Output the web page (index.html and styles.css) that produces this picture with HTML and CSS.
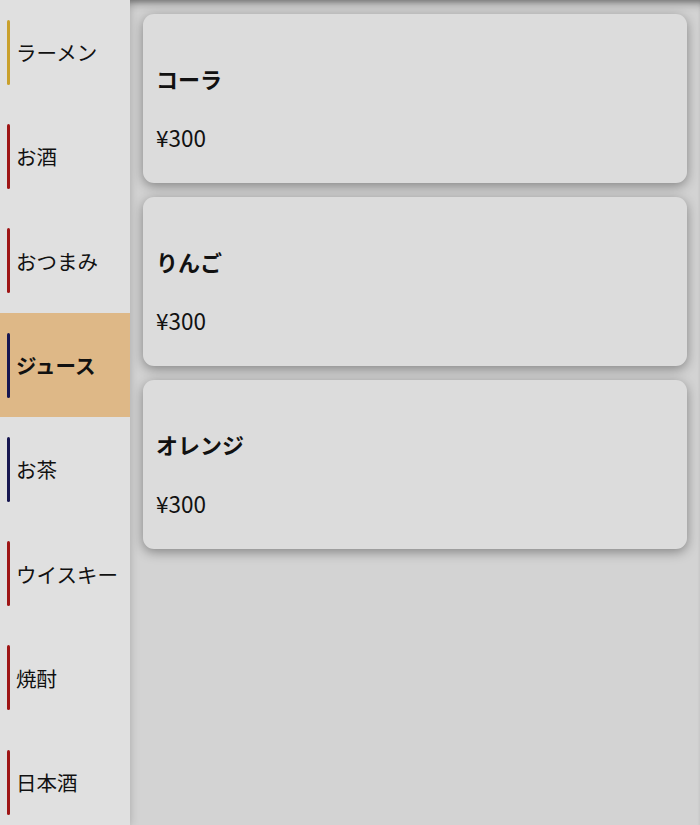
FILE: index.html
```html
<!DOCTYPE html>
<html lang="ja">
<head>
    <meta charset="UTF-8">
    <meta name="viewport" content="width=device-width, initial-scale=1.0">
    <title>メニュー</title>
    <link rel="stylesheet" href="styles.css">
</head>
<body>
    <div class="app">
        <nav class="sidebar">
            <div class="cat gold"><span class="bar"></span>ラーメン</div>
            <div class="cat red"><span class="bar"></span>お酒</div>
            <div class="cat red"><span class="bar"></span>おつまみ</div>
            <div class="cat navy active"><span class="bar"></span>ジュース</div>
            <div class="cat navy"><span class="bar"></span>お茶</div>
            <div class="cat red"><span class="bar"></span>ウイスキー</div>
            <div class="cat red"><span class="bar"></span>焼酎</div>
            <div class="cat red"><span class="bar"></span>日本酒</div>
        </nav>
        <main class="items">
            <div class="card">
                <h3>コーラ</h3>
                <p class="price">¥300</p>
            </div>
            <div class="card">
                <h3>りんご</h3>
                <p class="price">¥300</p>
            </div>
            <div class="card">
                <h3>オレンジ</h3>
                <p class="price">¥300</p>
            </div>
        </main>
    </div>
</body>
</html>
```

FILE: styles.css
```css
body {
    margin: 0;
    font-family: "Noto Sans CJK JP", "Noto Sans", sans-serif;
    color: #111;
    background-color: #d3d3d3;
}
.app {
    display: flex;
    height: 825px;
    overflow: hidden;
    box-shadow: inset 0 4px 4px -2px rgba(0,0,0,0.2);
}
.sidebar {
    width: 130px;
    flex-shrink: 0;
    background: #e0e0e0;
    box-shadow: 2px 0 8px rgba(0,0,0,0.12);
    position: relative;
    z-index: 1;
}
.cat {
    display: flex;
    align-items: center;
    gap: 6px;
    height: 104.3px;
    padding-left: 7px;
    font-size: 20.5px;
    box-sizing: border-box;
}
.cat .bar {
    width: 3px;
    height: 65px;
    border-radius: 2px;
    flex-shrink: 0;
}
.gold .bar { background: #c9a02c; }
.red .bar { background: #9e1515; }
.navy .bar { background: #161650; }
.cat.active {
    background: #deb887;
    font-weight: bold;
}
.items {
    flex: 1;
    padding: 14px 13px 0 13px;
    display: flex;
    flex-direction: column;
    gap: 14px;
    box-shadow: inset 0 10px 8px -6px rgba(0,0,0,0.3);
}
.card {
    background: #dcdcdc;
    border-radius: 11px;
    height: 169px;
    box-sizing: border-box;
    padding: 48px 13px 0 13px;
    box-shadow: 0 3px 12px rgba(0,0,0,0.38);
}
.card h3 {
    margin: 0;
    font-size: 22px;
    line-height: 32px;
}
.card .price {
    margin: 27px 0 0;
    font-size: 22.5px;
    line-height: 32px;
}
```
